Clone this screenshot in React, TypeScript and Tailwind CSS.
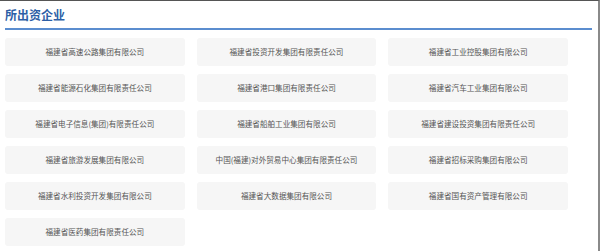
const companies = [
  "福建省高速公路集团有限公司",
  "福建省投资开发集团有限责任公司",
  "福建省工业控股集团有限公司",
  "福建省能源石化集团有限责任公司",
  "福建省港口集团有限责任公司",
  "福建省汽车工业集团有限公司",
  "福建省电子信息(集团)有限责任公司",
  "福建省船舶工业集团有限公司",
  "福建省建设投资集团有限责任公司",
  "福建省旅游发展集团有限公司",
  "中国(福建)对外贸易中心集团有限责任公司",
  "福建省招标采购集团有限公司",
  "福建省水利投资开发集团有限公司",
  "福建省大数据集团有限公司",
  "福建省国有资产管理有限公司",
  "福建省医药集团有限责任公司",
]

export default function App() {
  return (
    <div
      className="w-[600px] h-[251px] bg-white border-t border-t-[#555555] border-r-2 border-r-[#8a8a8a] overflow-hidden"
      style={{ fontFamily: '"Noto Sans CJK SC", "Noto Sans", sans-serif' }}
    >
      <div className="pl-[5px] pr-[6px] pt-px">
        {/* 标题 */}
        <div className="h-[28px] border-b-2 border-[#5b8dcf] flex items-center">
          <h2 className="text-[12px] font-bold text-[#2d5fa6] leading-none">所出资企业</h2>
        </div>

        {/* 企业列表 */}
        <div className="mt-[8px] w-[563px] grid grid-cols-3 gap-x-[12px] gap-y-[8px]">
          {companies.map((name) => (
            <div
              key={name}
              className="h-[28px] bg-[#f6f6f6] rounded-[3px] flex items-center justify-center text-[7.6px] text-[#555555] leading-none"
            >
              {name}
            </div>
          ))}
        </div>
      </div>
    </div>
  )
}
